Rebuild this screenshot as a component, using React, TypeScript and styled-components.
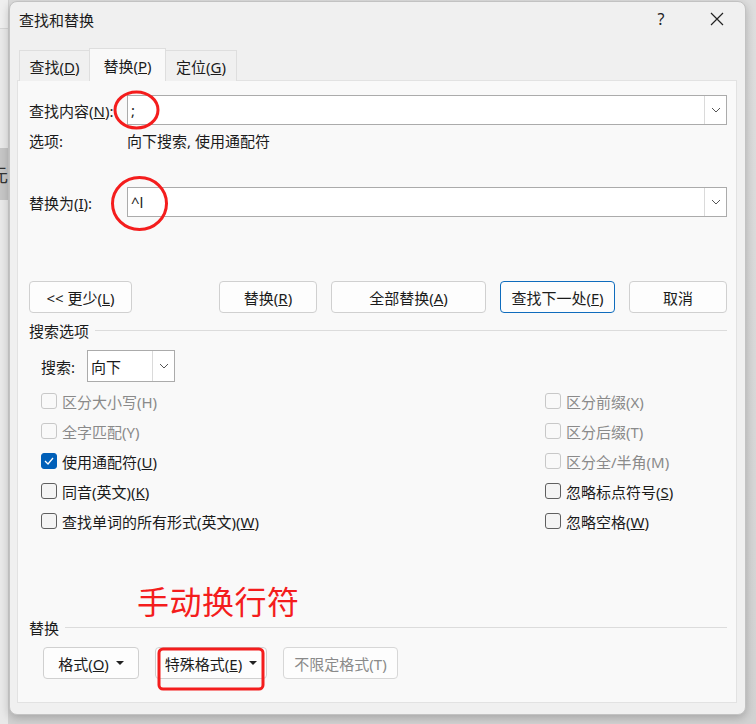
import React from 'react'
import styled, {createGlobalStyle, css} from 'styled-components'

const GlobalStyle = createGlobalStyle`
  html, body {
    margin: 0;
    padding: 0;
  }
  body {
    width: 756px;
    height: 724px;
    overflow: hidden;
    background: #d4d4d4;
    font-family: "Noto Sans", "Noto Sans CJK SC", sans-serif;
    font-size: 15px;
    color: #1b1b1b;
  }
`

const Desktop = styled.div`
  display: flex;
  width: 756px;
  height: 724px;
  background: linear-gradient(#dedede, #d2d2d2);
`

const LeftStrip = styled.div`
  flex: 0 0 9px;
  display: flex;
  flex-direction: column;
  background: #e9e9e9;
  border-right: 1px solid #d2d2d2;
  box-sizing: border-box;
  overflow: hidden;
`

const StripTop = styled.div`
  height: 28px;
  border-bottom: 1px solid #d6d6d6;
  background: #efefef;
`

const StripItem = styled.div`
  margin-top: 119px;
  height: 52px;
  background: #c6c6c6;
  display: flex;
  align-items: center;
  span {
    margin-left: -10px;
    font-family: "Noto Sans CJK SC", sans-serif;
    font-size: 18px;
    color: #333;
  }
`

const Dialog = styled.div`
  margin-top: 1px;
  width: 737px;
  height: 714px;
  box-sizing: border-box;
  border: 1px solid #c2c2c2;
  border-radius: 8px;
  background: #f0f0f0;
  box-shadow: 0 3px 10px rgba(0, 0, 0, 0.22);
  display: flex;
  flex-direction: column;
  padding: 0 8px 11px 7px;
`

const TitleBar = styled.div`
  height: 34px;
  margin-right: -8px;
  padding-left: 2px;
  display: flex;
  align-items: center;
`

const Title = styled.div`
  flex: 1;
`

const TitleButton = styled.div`
  width: 56px;
  height: 34px;
  display: flex;
  align-items: center;
  justify-content: center;
  font-size: 16px;
  color: #222;
`

const TabStrip = styled.div`
  margin-top: 12px;
  height: 33px;
  margin-bottom: -1px;
  padding-left: 2px;
  display: flex;
  align-items: flex-end;
  position: relative;
  z-index: 1;
`

const Tab = styled.div<{$active?: boolean; $w: number}>`
  width: ${p => p.$w}px;
  height: 31px;
  box-sizing: border-box;
  border: 1px solid #dedede;
  border-bottom: none;
  background: #f0f0f0;
  display: flex;
  align-items: center;
  justify-content: center;
  & + & {
    margin-left: -1px;
  }
  ${p => p.$active && css`
    height: 33px;
    background: #f9f9f9;
    position: relative;
    z-index: 1;
  `}
`

const Panel = styled.div`
  position: relative;
  height: 623px;
  box-sizing: border-box;
  border: 1px solid #e2e2e2;
  background: #f9f9f9;
  padding: 0 9px 0 11px;
  display: flex;
  flex-direction: column;
`

const FieldRow = styled.div<{$top: number}>`
  margin-top: ${p => p.$top}px;
  height: 30px;
  display: grid;
  grid-template-columns: 98px 1fr;
  align-items: center;
`

const Combo = styled.div`
  height: 30px;
  box-sizing: border-box;
  border: 1px solid #ababab;
  background: #fff;
  display: flex;
  align-items: stretch;
`

const ComboValue = styled.div`
  flex: 1;
  padding-left: 3px;
  display: flex;
  align-items: center;
`

const DropButton = styled.div`
  width: 21px;
  border-left: 1px solid #dadada;
  display: flex;
  align-items: center;
  justify-content: center;
  background: #fff;
`

const ButtonRow = styled.div`
  margin-top: 64px;
  display: flex;
  gap: 14px;
  & > :first-child {
    margin-right: auto;
  }
`

const Button = styled.div<{$w: number; $primary?: boolean; $disabled?: boolean}>`
  width: ${p => p.$w}px;
  height: 32px;
  box-sizing: border-box;
  border: 1px solid #d0d0d0;
  border-radius: 4px;
  background: #fdfdfd;
  display: flex;
  align-items: center;
  justify-content: center;
  ${p => p.$primary && css`
    border-color: #0f6cbd;
  `}
  ${p => p.$disabled && css`
    color: #8a8a8a;
    border-color: #d7d7d7;
  `}
`

const Caret = styled.span`
  display: inline-block;
  margin-left: 7px;
  border-left: 4px solid transparent;
  border-right: 4px solid transparent;
  border-top: 4px solid #222;
`

const SectionHeader = styled.div<{$top: number}>`
  margin-top: ${p => p.$top}px;
  height: 20px;
  display: flex;
  align-items: center;
  gap: 6px;
  &::after {
    content: "";
    flex: 1;
    height: 1px;
    background: #dcdcdc;
  }
`

const SearchRow = styled.div`
  margin-top: 10px;
  padding-left: 12px;
  display: flex;
  align-items: center;
`

const SearchLabel = styled.span`
  width: 46px;
`

const Select = styled.div`
  width: 88px;
  height: 32px;
  box-sizing: border-box;
  border: 1px solid #ababab;
  background: #fff;
  display: flex;
  align-items: stretch;
`

const CheckGrid = styled.div`
  margin-top: 4px;
  padding-left: 12px;
  display: grid;
  grid-template-columns: 504px 1fr;
  grid-auto-rows: 30px;
`

const CheckItem = styled.label<{$disabled?: boolean}>`
  display: flex;
  align-items: center;
  gap: 5px;
  color: ${p => (p.$disabled ? '#8a8a8a' : '#1b1b1b')};
`

const Box = styled.span<{$checked?: boolean; $disabled?: boolean}>`
  flex: none;
  width: 16px;
  height: 16px;
  box-sizing: border-box;
  border-radius: 3px;
  border: 1px solid ${p => (p.$disabled ? '#c8c8c8' : '#5f5f5f')};
  background: ${p => (p.$disabled ? 'transparent' : '#f4f4f4')};
  display: flex;
  align-items: center;
  justify-content: center;
  ${p => p.$checked && css`
    border-color: #005fb8;
    background: #005fb8;
  `}
`

const BottomRow = styled.div`
  margin-top: 10px;
  padding-left: 14px;
  display: flex;
  gap: 16px;
`

const Overlay = styled.svg`
  position: absolute;
  left: 0;
  top: 0;
  pointer-events: none;
`

const Note = styled.div`
  position: absolute;
  left: 119px;
  top: 499px;
  font-family: "Noto Sans CJK SC", sans-serif;
  font-size: 32px;
  line-height: 40px;
  letter-spacing: 0.5px;
  color: #f41d1d;
  pointer-events: none;
`

const Chevron = () => (
  <svg width="10" height="6" viewBox="0 0 10 6">
    <polyline points="1,1 5,5 9,1" fill="none" stroke="#555" strokeWidth="1" />
  </svg>
)

const Tick = () => (
  <svg width="10" height="8" viewBox="0 0 10 8">
    <polyline points="1,4 4,7 9,1" fill="none" stroke="#fff" strokeWidth="1.3" />
  </svg>
)

interface Opt {
  text: React.ReactNode
  disabled?: boolean
  checked?: boolean
}

const options: Opt[] = [
  {text: '区分大小写(H)', disabled: true},
  {text: '区分前缀(X)', disabled: true},
  {text: '全字匹配(Y)', disabled: true},
  {text: '区分后缀(T)', disabled: true},
  {text: <>使用通配符(<u>U</u>)</>, checked: true},
  {text: '区分全/半角(M)', disabled: true},
  {text: <>同音(英文)(<u>K</u>)</>},
  {text: <>忽略标点符号(<u>S</u>)</>},
  {text: <>查找单词的所有形式(英文)(<u>W</u>)</>},
  {text: <>忽略空格(<u>W</u>)</>},
]

export default function App() {
  return (
    <Desktop>
      <GlobalStyle />
      <LeftStrip>
        <StripTop />
        <StripItem><span>元</span></StripItem>
      </LeftStrip>
      <Dialog>
        <TitleBar>
          <Title>查找和替换</Title>
          <TitleButton>?</TitleButton>
          <TitleButton>
            <svg width="14" height="14" viewBox="0 0 14 14">
              <path d="M1 1 L13 13 M13 1 L1 13" stroke="#222" strokeWidth="1.2" />
            </svg>
          </TitleButton>
        </TitleBar>
        <TabStrip>
          <Tab $w={71}><span>查找(<u>D</u>)</span></Tab>
          <Tab $w={77} $active><span>替换(<u>P</u>)</span></Tab>
          <Tab $w={72}><span>定位(<u>G</u>)</span></Tab>
        </TabStrip>
        <Panel>
          <FieldRow $top={14}>
            <span>查找内容(<u>N</u>):</span>
            <Combo>
              <ComboValue>;</ComboValue>
              <DropButton><Chevron /></DropButton>
            </Combo>
          </FieldRow>
          <FieldRow $top={0}>
            <span>选项:</span>
            <span>向下搜索, 使用通配符</span>
          </FieldRow>
          <FieldRow $top={32}>
            <span>替换为(<u>I</u>):</span>
            <Combo>
              <ComboValue>^l</ComboValue>
              <DropButton><Chevron /></DropButton>
            </Combo>
          </FieldRow>
          <ButtonRow>
            <Button $w={103}><span>&lt;&lt; 更少(<u>L</u>)</span></Button>
            <Button $w={98}><span>替换(<u>R</u>)</span></Button>
            <Button $w={155}><span>全部替换(<u>A</u>)</span></Button>
            <Button $w={115} $primary><span>查找下一处(<u>F</u>)</span></Button>
            <Button $w={98}>取消</Button>
          </ButtonRow>
          <SectionHeader $top={7}>搜索选项</SectionHeader>
          <SearchRow>
            <SearchLabel>搜索:</SearchLabel>
            <Select>
              <ComboValue>向下</ComboValue>
              <DropButton><Chevron /></DropButton>
            </Select>
          </SearchRow>
          <CheckGrid>
            {options.map((o, i) => (
              <CheckItem key={i} $disabled={o.disabled}>
                <Box $checked={o.checked} $disabled={o.disabled}>{o.checked && <Tick />}</Box>
                <span>{o.text}</span>
              </CheckItem>
            ))}
          </CheckGrid>
          <SectionHeader $top={81}>替换</SectionHeader>
          <BottomRow>
            <Button $w={96}><span>格式(<u>O</u>)</span><Caret /></Button>
            <Button $w={112}><span>特殊格式(<u>E</u>)</span><Caret /></Button>
            <Button $w={115} $disabled>不限定格式(T)</Button>
          </BottomRow>
          <Note>手动换行符</Note>
          <Overlay width="718" height="621">
            <ellipse cx="118.5" cy="29" rx="21.5" ry="18" fill="none" stroke="#f41d1d" strokeWidth="3" />
            <ellipse cx="121.5" cy="122.5" rx="27" ry="26" fill="none" stroke="#f41d1d" strokeWidth="3" />
            <rect x="141" y="568" width="104" height="40" rx="4" fill="none" stroke="#f41d1d" strokeWidth="3" />
          </Overlay>
        </Panel>
      </Dialog>
    </Desktop>
  )
}
